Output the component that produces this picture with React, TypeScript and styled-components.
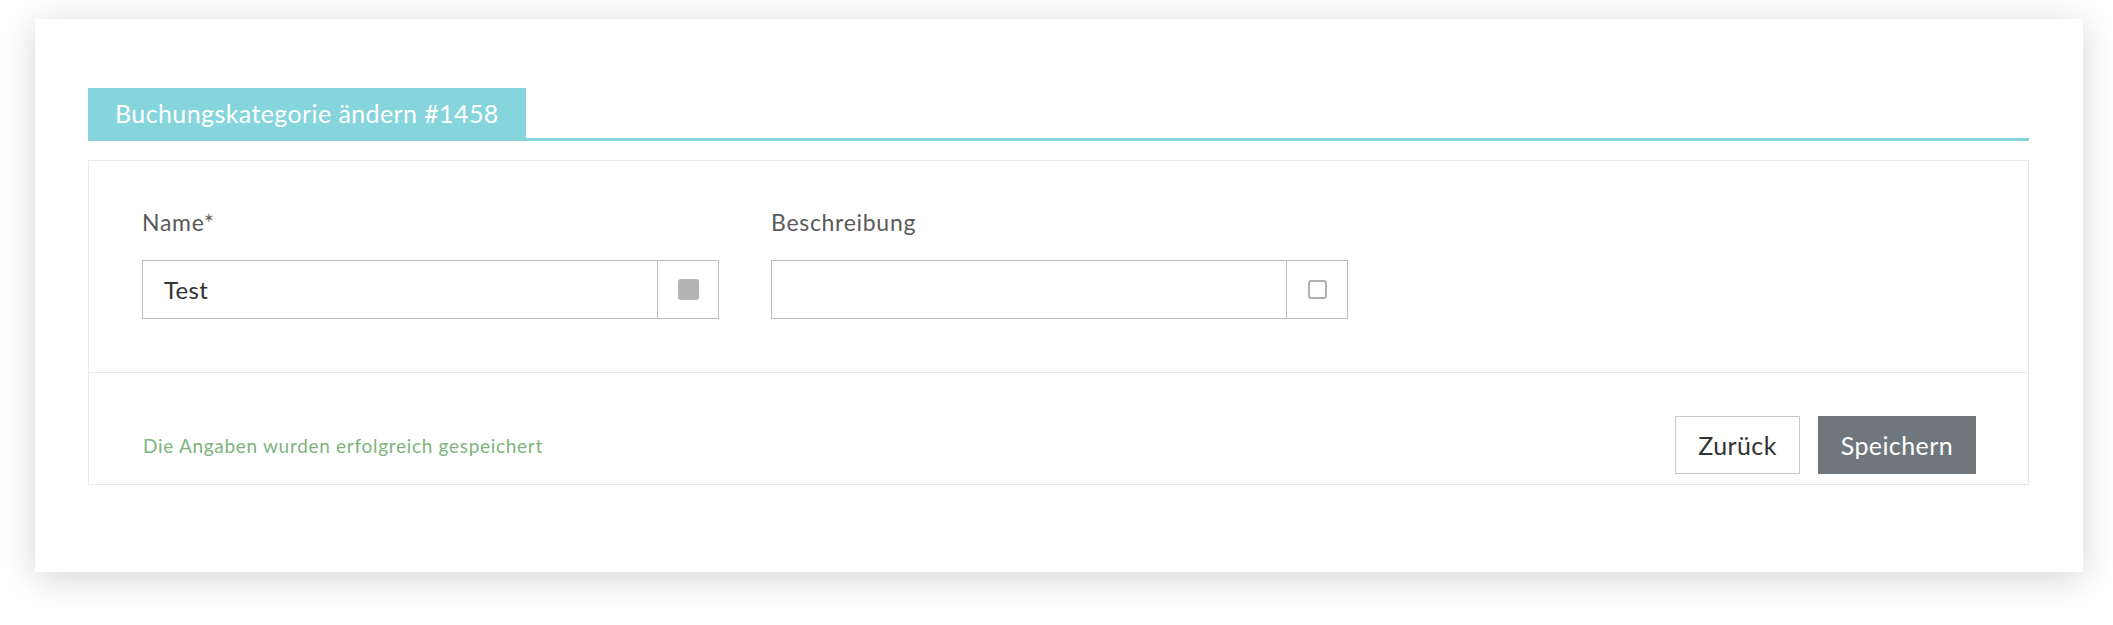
import React from "react";
import styled, { createGlobalStyle } from "styled-components";

const GlobalStyle = createGlobalStyle`
  body {
    margin: 0;
    background: #fff;
    font-family: Lato, "Open Sans", sans-serif;
  }
`;

const teal = "#86d4dc";

export default function App() {
  return (
    <>
      <GlobalStyle />
      <Page>
        <Card>
          <TabBar>
            <Tab>Buchungskategorie ändern #1458</Tab>
          </TabBar>
          <Panel>
            <FieldsRow>
              <Field>
                <Label>Name*</Label>
                <InputGroup>
                  <TextField defaultValue="Test" />
                  <Addon>
                    <Swatch $filled />
                  </Addon>
                </InputGroup>
              </Field>
              <Field>
                <Label>Beschreibung</Label>
                <InputGroup>
                  <TextField defaultValue="" />
                  <Addon>
                    <Swatch />
                  </Addon>
                </InputGroup>
              </Field>
            </FieldsRow>
            <Footer>
              <Message>Die Angaben wurden erfolgreich gespeichert</Message>
              <Actions>
                <Button type="button">Zurück</Button>
                <Button type="button" $primary>
                  Speichern
                </Button>
              </Actions>
            </Footer>
          </Panel>
        </Card>
      </Page>
    </>
  );
}

const Page = styled.div`
  padding: 19px 30px 54px 35px;
`;

const Card = styled.div`
  background: #fff;
  box-shadow: 0 6px 35px rgba(0, 0, 0, 0.17);
  padding: 69px 54px 87px 53px;
`;

const TabBar = styled.div`
  display: flex;
  border-bottom: 3px solid ${teal};
`;

const Tab = styled.div`
  background: ${teal};
  color: #fff;
  font-size: 25px;
  letter-spacing: 0.4px;
  height: 50px;
  padding: 0 27px;
  display: flex;
  align-items: center;
`;

const Panel = styled.div`
  margin-top: 19px;
  border: 1px solid #e9e9e9;
`;

const FieldsRow = styled.div`
  display: flex;
  gap: 52px;
  padding: 47px 53px 53px;
`;

const Field = styled.div`
  width: 577px;
  display: flex;
  flex-direction: column;
`;

const Label = styled.label`
  font-size: 23px;
  letter-spacing: 0.7px;
  line-height: 28px;
  color: #5a5a5a;
  margin-bottom: 24px;
`;

const InputGroup = styled.div`
  display: flex;
  height: 59px;
  box-sizing: border-box;
  border: 1px solid #bdbdbd;
`;

const TextField = styled.input`
  flex: 1;
  min-width: 0;
  border: none;
  outline: none;
  padding: 0 21px;
  font-family: inherit;
  font-size: 24px;
  letter-spacing: 0.3px;
  color: #333;
  background: transparent;
`;

const Addon = styled.div`
  width: 60px;
  border-left: 1px solid #bdbdbd;
  display: flex;
  align-items: center;
  justify-content: center;
`;

const Swatch = styled.span<{ $filled?: boolean }>`
  width: ${(p) => (p.$filled ? "21px" : "19px")};
  height: ${(p) => (p.$filled ? "21px" : "19px")};
  box-sizing: border-box;
  border-radius: 3px;
  background: ${(p) => (p.$filled ? "#b4b4b4" : "#fff")};
  border: ${(p) => (p.$filled ? "none" : "2px solid #b0b0b0")};
`;

const Footer = styled.div`
  border-top: 1px solid #e9e9e9;
  display: flex;
  align-items: center;
  justify-content: space-between;
  padding: 43px 52px 10px 54px;
`;

const Message = styled.span`
  color: #7db47d;
  font-size: 19px;
  letter-spacing: 0.7px;
`;

const Actions = styled.div`
  display: flex;
  gap: 18px;
`;

const Button = styled.button<{ $primary?: boolean }>`
  height: 58px;
  padding: 0 22px;
  font-family: inherit;
  font-size: 25px;
  letter-spacing: 0.4px;
  cursor: pointer;
  color: ${(p) => (p.$primary ? "#fff" : "#333")};
  background: ${(p) => (p.$primary ? "#6f777c" : "#fff")};
  border: 1px solid ${(p) => (p.$primary ? "#6f777c" : "#c8c8c8")};
`;
